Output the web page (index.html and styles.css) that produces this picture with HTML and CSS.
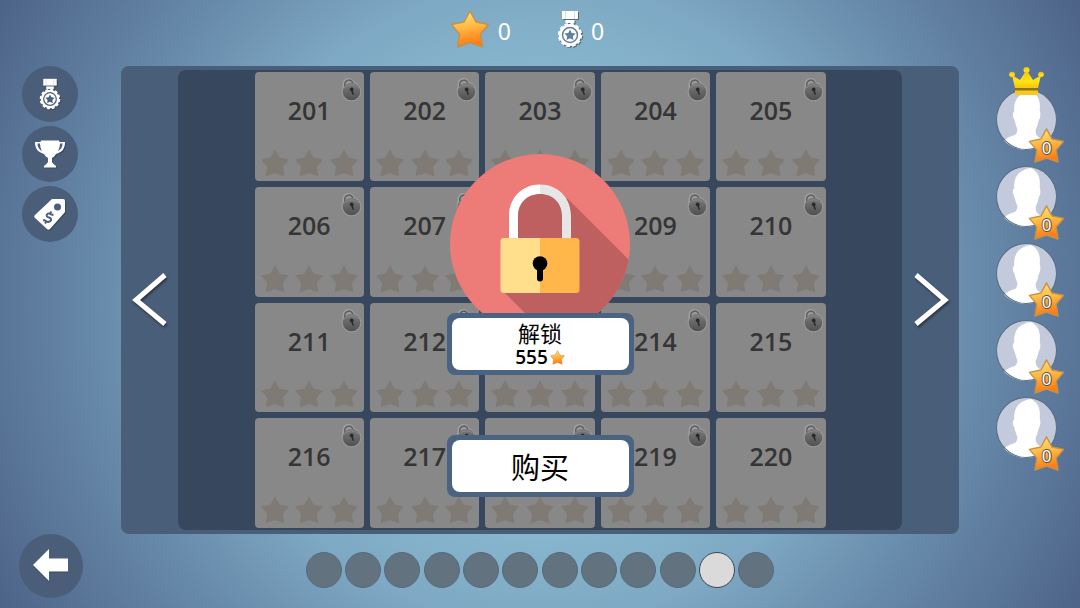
FILE: index.html
```
<!DOCTYPE html>
<html lang="zh-CN">
<head>
<meta charset="utf-8">
<meta name="viewport" content="width=device-width, initial-scale=1">
<title>关卡选择</title>
<link rel="stylesheet" href="styles.css">
</head>
<body>
<svg class="defs" aria-hidden="true">
  <defs>
    <linearGradient id="gold" x1="0" y1="0" x2="0.2" y2="1">
      <stop offset="0" stop-color="#ffe680"/><stop offset="0.45" stop-color="#ffc04a"/><stop offset="1" stop-color="#ff7a12"/>
    </linearGradient>
    <linearGradient id="crownfill" x1="0" y1="0" x2="0" y2="1">
      <stop offset="0" stop-color="#f3b90c"/><stop offset="0.6" stop-color="#ffe614"/><stop offset="1" stop-color="#f8c313"/>
    </linearGradient>
    <linearGradient id="steel" x1="0" y1="0" x2="0" y2="1">
      <stop offset="0" stop-color="#7c7c7c"/><stop offset="1" stop-color="#505050"/>
    </linearGradient>
    <symbol id="star" viewBox="0 0 40 40">
      <path d="M20 2 26 13 38.500 15.500 30.500 25 32.500 38 20 33.500 7.500 38 9.500 25 1.500 15.500 14 13Z" stroke-width="1.500" stroke-linejoin="round"/>
    </symbol>
    <symbol id="medal" viewBox="0 0 26 38">
      <path fill="#fff" d="M5 1h16v8H5z"/>
      <path fill="#fff" d="M8.500 10h9v3h-9z"/>
      <path d="M8.500 1v8M17.500 1v8" stroke="#cfd8e0" stroke-width="0.800"/>
      <circle cx="13" cy="25" r="11" fill="#fff"/>
      <circle cx="13" cy="25" r="11" fill="none" stroke="#fff" stroke-width="2.400" stroke-dasharray="3.400 2.360"/>
      <circle cx="13" cy="25" r="7.500" fill="none" stroke="currentColor" stroke-width="1.500"/>
      <path fill="currentColor" d="m13 19.500 1.700 3.500 3.900.5-2.800 2.700.7 3.900-3.500-1.900-3.500 1.900.7-3.900-2.800-2.700 3.900-.5z"/>
    </symbol>
    <symbol id="padlock" viewBox="0 0 24 26">
      <circle cx="12.500" cy="14.500" r="10" fill="#989898"/>
      <path d="M5.500 12V7.500a4 4 0 0 1 8-1V9" fill="none" stroke="#a0a0a0" stroke-width="4"/>
      <path d="M5.800 12V7.500a4 3.800 0 0 1 8-1V9" fill="none" stroke="#606060" stroke-width="1.600"/>
      <circle cx="12.500" cy="14.500" r="8.800" fill="url(#steel)"/>
      <path d="M5 11c4-4 11-4 15 0" fill="none" stroke="#888" stroke-width="1"/>
      <path d="M10.800 13.300a2 2 0 1 1 3.200.8l1 3.900-1.600-.4-1-3.100z" fill="#2a2a2a"/>
    </symbol>
    <symbol id="person" viewBox="0 0 60 60">
      <circle cx="30" cy="30" r="29.500" fill="#c3cadb"/>
      <path fill="#fff" d="M18 22C17 10 23 4 34 2c7 3 10 9 9 19 1 3 1 7-1 10-1 5-2 7-3 9 0 6 2 7 6 9 3 1 5 2 6 3C46 57 38 60 30 60S14 57 8 51c1-2 4-3 8-5 4-1 5-3 5-7-1-2-2-5-3-9-2-3-2-6 0-8z"/>
      <circle cx="30" cy="30" r="29.500" fill="none" stroke="#5a6c80"/>
    </symbol>
  </defs>
</svg>

<header class="stats">
  <div class="stat"><svg class="stat-star gold"><use href="#star"/></svg><span>0</span></div>
  <div class="stat"><svg class="stat-medal"><use href="#medal"/></svg><span>0</span></div>
</header>

<nav class="tools">
  <button class="tool" aria-label="成就"><svg class="tool-medal"><use href="#medal"/></svg></button>
  <button class="tool" aria-label="排行榜">
    <svg class="tool-icon" viewBox="0 0 32 32">
      <path fill="#fff" d="M7 2.500h18l.5 1.500H31c0 7-3 10-9 12-1 2-2.500 3-4 4v4c1 2 3 3 4 4v1.500H10V28c1-1 3-2 4-4v-4c-1.500-1-3-2-4-4C4 14 1 11 1 4h5.500z"/>
      <path fill="#4a5e7a" d="M3.500 5.500H6c.2 3 .7 5 2 7.500C5 11.500 3.500 9 3.500 5.500zM28.500 5.500H26c-.2 3-.7 5-2 7.500 3-1.500 4.500-4 4.500-7.500z"/>
    </svg>
  </button>
  <button class="tool" aria-label="优惠">
    <svg class="tool-icon" viewBox="0 0 32 32">
      <path fill="#fff" d="M18 1h11q2 0 2 2v11L16 31q-1.500 1.500-3 0L1 20q-1.500-1.500 0-3z"/>
      <circle cx="23.500" cy="9" r="3.500" fill="#4a5e7a"/>
      <path fill="none" stroke="#4a5e7a" stroke-width="2" d="M17.500 17c-2-3-6-1-4.500 1.500 1 1.500 3.500.5 4 2.500.5 2.500-4 4.500-6 1M16 15.500l1.500-2M12.500 23l-1.500 2.500M17.500 17l2-.5M11 22l-2 .5"/>
    </svg>
  </button>
</nav>

<main class="panel">
  <button class="arrow" aria-label="上一页"><svg viewBox="0 0 36 56"><path d="M33 3 4 28l29 24"/></svg></button>
  <section class="board"><div class="levels" id="levels"></div></section>
  <button class="arrow" aria-label="下一页"><svg viewBox="0 0 36 56"><path d="M3 3l29 25L3 52"/></svg></button>

  <div class="offer">
    <svg class="emblem" viewBox="0 0 180 180" aria-hidden="true">
      <defs><clipPath id="disc"><circle cx="90" cy="90" r="90"/></clipPath></defs>
      <circle cx="90" cy="90" r="90" fill="#ed7c79"/>
      <path clip-path="url(#disc)" fill="#bd605f" d="M63 50 90 35 118 45 200 127V200H116L53 137 64 85z"/>
      <path fill="#fff" d="M59 85V62c0-18 13-31.500 31-31.500V40c-13 0-22 9-22 22v23z"/>
      <path fill="#e6e6e6" d="M121 85V62c0-18-13-31.500-31-31.500V40c13 0 22 9 22 22v23z"/>
      <path fill="#ffdf8c" d="M90 84v55H54q-3.500 0-3.500-3.500v-48Q50.500 84 54 84z"/>
      <path fill="#ffb74b" d="M90 84v55h36q3.500 0 3.500-3.500v-48q0-3.500-3.500-3.500z"/>
      <circle cx="90" cy="109.500" r="7.300"/>
      <path d="M90 112v12.500" stroke="#000" stroke-width="6" stroke-linecap="round"/>
    </svg>
    <button class="action unlock">
      <span class="unlock-title">解锁</span>
      <span class="price">555<svg class="price-star gold"><use href="#star"/></svg></span>
    </button>
    <button class="action buy">购买</button>
  </div>
</main>

<aside class="players" id="players"></aside>

<div class="back-area">
  <button class="back" aria-label="返回"><svg viewBox="0 0 36 34"><path fill="#fff" d="M0 16 16 0v9.500h19v13H16V32z"/></svg></button>
</div>
<nav class="pager" id="pager"></nav>

<script src="app.js"></script>
</body>
</html>
```

FILE: styles.css
```
* { box-sizing: border-box; }

body {
  margin: 0;
  min-height: 100vh;
  display: grid;
  grid-template-columns: 121px 1fr 121px;
  grid-template-rows: 66px auto 1fr;
  font-family: "Open Sans", "Noto Sans CJK SC", sans-serif;
  background: radial-gradient(circle farthest-corner at center, #a0d8e8 0%, #86b4cd 39%, #7ea8c3 52%, #6b8fae 68%, #4d6388 100%);
}

button {
  padding: 0;
  border: 0;
  font: inherit;
  color: inherit;
  background: none;
  cursor: pointer;
}

svg { display: block; }
.defs { position: absolute; width: 0; height: 0; }

.gold { fill: url(#gold); stroke: #c4924a; }

.stats {
  grid-column: 2;
  display: flex;
  justify-content: center;
  align-items: center;
  gap: 46px;
  padding: 0 26px 4px 0;
  color: #fff;
  font-family: "Noto Sans", sans-serif;
  font-size: 23px;
}
.stat { display: flex; align-items: center; gap: 8px; }
.stat-star { width: 40px; height: 40px; margin-top: -4px; }
.stat-medal {
  width: 26px;
  height: 38px;
  margin-top: -4px;
  color: #5f7f9a;
  filter: drop-shadow(1px 1px 0 #56697a);
}

.tools {
  grid-column: 1;
  display: flex;
  flex-direction: column;
  align-items: flex-start;
  gap: 4px;
  padding-left: 22px;
}
.tool {
  display: grid;
  place-items: center;
  width: 56px;
  height: 56px;
  border-radius: 50%;
  background: #4a5e7a;
  color: #4a5e7a;
}
.tool svg { filter: drop-shadow(1px 1px 0 #38485c); }
.tool-medal { width: 22px; height: 32px; }
.tool-icon { width: 32px; height: 32px; }

.panel {
  position: relative;
  grid-column: 2;
  display: grid;
  grid-template-columns: 57px 1fr 57px;
  padding: 4px 0;
  border-radius: 8px;
  background: #495e79;
}
.arrow { display: grid; place-items: center; }
.arrow svg {
  width: 36px;
  height: 56px;
  fill: none;
  stroke: #fff;
  stroke-width: 5;
  filter: drop-shadow(1px 2px 1px #2c3540);
}

.board {
  display: flex;
  justify-content: center;
  padding: 2px 0;
  border-radius: 8px;
  background: #37475d;
}
.levels {
  flex: 0 1 571px;
  display: grid;
  grid-template-columns: repeat(5, 1fr);
  gap: 6px;
}
.level {
  position: relative;
  aspect-ratio: 1;
  display: flex;
  flex-direction: column;
  justify-content: space-between;
  padding: 20px 6px 4px;
  border-radius: 4px;
  background: #888;
  color: #353535;
  font-size: 25px;
  font-weight: 600;
  line-height: 36px;
}
.level-stars { display: flex; justify-content: space-between; }
.level-stars svg { width: 28px; height: 28px; fill: #7f7a74; stroke: #7f7a74; }
.level-lock { position: absolute; top: 5px; right: 1px; width: 24px; height: 26px; }

.offer {
  position: absolute;
  inset: 0;
  display: flex;
  flex-direction: column;
  align-items: center;
  padding-top: 88px;
  pointer-events: none;
}
.emblem { width: 180px; height: 180px; margin-bottom: -21px; }
.action {
  position: relative;
  z-index: 0;
  width: 187px;
  height: 62px;
  border: 5px solid #4b6382;
  border-radius: 8px;
  background: #4b6382;
  color: #000;
  pointer-events: auto;
}
.action::before {
  content: "";
  position: absolute;
  inset: 0;
  z-index: -1;
  border-radius: 8px;
  background: #fff;
}
.unlock {
  display: flex;
  flex-direction: column;
  align-items: center;
  justify-content: center;
  margin-bottom: 60px;
}
.unlock-title { font-family: "Noto Sans CJK SC", sans-serif; font-size: 22px; line-height: 26px; }
.price { display: flex; align-items: center; gap: 2px; font-size: 19px; font-weight: 600; line-height: 24px; }
.price-star { width: 15px; height: 15px; }
.buy { font-family: "Noto Sans CJK SC", sans-serif; font-size: 29px; line-height: 40px; }

.players {
  grid-column: 3;
  display: flex;
  flex-direction: column;
  align-items: flex-start;
  gap: 16px;
  padding: 23px 0 0 37px;
}
.player { position: relative; width: 61px; height: 61px; }
.avatar { width: 61px; height: 61px; }
.crown { position: absolute; left: 13px; top: -22px; width: 35px; height: 29px; }
.badge {
  position: absolute;
  right: -8px;
  bottom: -14px;
  display: grid;
  place-items: center;
}
.badge svg { grid-area: 1 / 1; width: 37px; height: 37px; }
.badge-count {
  grid-area: 1 / 1;
  padding-top: 4px;
  color: #fff;
  font-family: "Noto Sans", sans-serif;
  font-size: 17px;
  line-height: 20px;
  -webkit-text-stroke: 2px #5b5347;
  paint-order: stroke fill;
}

.back-area { grid-column: 1; padding-left: 19px; }
.back {
  display: grid;
  place-items: center;
  width: 64px;
  height: 64px;
  border-radius: 50%;
  background: #4a5e79;
}
.back svg { width: 36px; height: 34px; filter: drop-shadow(0 1px 0 #35435a); }

.pager {
  grid-column: 2;
  justify-self: center;
  align-self: start;
  display: flex;
  justify-content: space-between;
  width: 469px;
  max-width: 100%;
  padding-top: 18px;
}
.page {
  width: 36px;
  height: 36px;
  border: 1px solid #566b7b;
  border-radius: 50%;
  background: #62727e;
}
.page-current { border-color: #3c444b; background: #dadada; }
```

FILE: app.js
```
const star = '<svg><use href="#star"/></svg>';

document.getElementById("levels").innerHTML = Array.from({ length: 20 }, (_, i) => `
  <button class="level">
    <span>${201 + i}</span>
    <span class="level-stars">${star.repeat(3)}</span>
    <svg class="level-lock"><use href="#padlock"/></svg>
  </button>`).join("");

const crown = `
  <svg class="crown" viewBox="0 0 35 29">
    <g fill="url(#crownfill)">
      <path d="M6 21 3 8l8 5 6.500-10L24 13l8-5-3 13z"/>
      <circle cx="3" cy="7.500" r="2.800"/><circle cx="17.500" cy="3" r="3"/><circle cx="32" cy="7.500" r="2.800"/>
    </g>
    <path fill="#8b7420" d="M6 21h23v3H6z"/>
    <path fill="#f8c91a" d="M6 23.500h23V28H6z"/>
  </svg>`;

document.getElementById("players").innerHTML = Array.from({ length: 5 }, (_, i) => `
  <div class="player">
    <svg class="avatar"><use href="#person"/></svg>
    ${i === 0 ? crown : ""}
    <div class="badge"><svg class="gold"><use href="#star"/></svg><span class="badge-count">0</span></div>
  </div>`).join("");

document.getElementById("pager").innerHTML = Array.from({ length: 12 }, (_, i) =>
  `<button class="page${i === 10 ? " page-current" : ""}" aria-label="第${i + 1}页"></button>`).join("");
```
